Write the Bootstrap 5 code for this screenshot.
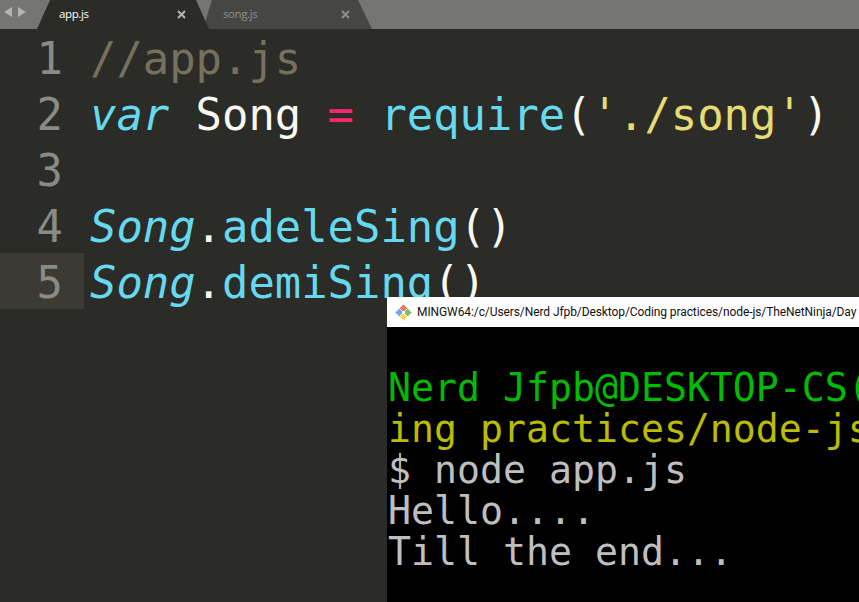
<!DOCTYPE html>
<html lang="en">
<head>
<meta charset="utf-8">
<title>app.js</title>
<link rel="stylesheet" href="https://cdn.jsdelivr.net/npm/bootstrap@5.3.0/dist/css/bootstrap.min.css">
<style>
html,body{width:859px;height:602px;overflow:hidden;background:#2b2c27;margin:0}
.stage{position:relative;width:859px;height:602px;overflow:hidden}
.tabbar{height:29px;background:#757672;position:relative}
.arrows{width:37px;padding-left:4px;gap:6px;height:29px;padding-bottom:5px}
.tabshape{position:absolute;top:0;height:29px;font:11.5px "Open Sans","Liberation Sans",sans-serif;letter-spacing:-.4px}
.tab-on{left:37px;width:172px;background:#2b2c27;color:#fff;clip-path:polygon(0 100%,13px 0,159px 0,172px 100%);z-index:2}
.tab-off{left:203px;width:169px;background:#464743;color:#8e8f8a;clip-path:polygon(0 100%,9px 0,155px 0,169px 100%);z-index:1}
.tabname{position:absolute;top:6px;line-height:16px}
.tab-on .tabname{left:22px}
.tab-off .tabname{left:20px}
.tabx{position:absolute;top:10px;width:9px;height:9px}
.tab-on .tabx{left:140px}
.tab-off .tabx{left:138px}
.codeline{height:56px;font:43.85px/59px "DejaVu Sans Mono",monospace;white-space:pre}
.gutter{width:84px;padding-right:21px;text-align:right;color:#8a8b86;flex:none;height:56px}
.codeline.current .gutter{background:#3b3b33}
.codetext{padding-left:6px;color:#f8f8f2}
.c-com{color:#75715e}.c-kw{color:#66d9ef;font-style:italic}.c-fn{color:#66d9ef}.c-op{color:#f92672}.c-str{color:#e6db74}
.term{position:absolute;left:387px;top:297px;width:472px;height:305px;background:#000;z-index:5}
.termhead{height:30px;background:#fff;padding-left:8px;gap:5px;font:12px/30px Roboto,"Liberation Sans",sans-serif;letter-spacing:-.09px;color:#111;white-space:nowrap}
.termbody{padding:0 0 0 1px;font:38.2px/41px "DejaVu Sans Mono",monospace;color:#bfbfbf}
.termrow{height:41px;white-space:pre}
.t-green{color:#00bb00}.t-yellow{color:#bbbb00}
</style>
</head>
<body>
<div class="stage">
  <div class="tabbar d-flex">
    <div class="arrows d-flex align-items-center">
      <svg width="8" height="10" viewBox="0 0 8 10"><path d="M8 0V10L0 5Z" fill="#b4b5b2"/></svg>
      <svg width="8" height="10" viewBox="0 0 8 10"><path d="M0 0V10L8 5Z" fill="#b4b5b2"/></svg>
    </div>
    <div class="tabshape tab-on"><span class="tabname">app.js</span>
      <svg class="tabx" viewBox="0 0 9 9"><path d="M1 1L8 8M8 1L1 8" stroke="#b5b5b2" stroke-width="2"/></svg></div>
    <div class="tabshape tab-off"><span class="tabname">song.js</span>
      <svg class="tabx" viewBox="0 0 9 9"><path d="M1 1L8 8M8 1L1 8" stroke="#8f908c" stroke-width="2"/></svg></div>
  </div>
  <div class="codeline d-flex"><div class="gutter">1</div><div class="codetext"><span class="c-com">//app.js</span></div></div>
  <div class="codeline d-flex"><div class="gutter">2</div><div class="codetext"><span class="c-kw">var</span> Song <span class="c-op">=</span> <span class="c-fn">require</span>(<span class="c-str">'./song'</span>)</div></div>
  <div class="codeline d-flex"><div class="gutter">3</div><div class="codetext"></div></div>
  <div class="codeline d-flex"><div class="gutter">4</div><div class="codetext"><span class="c-kw">Song</span>.<span class="c-fn">adeleSing</span>()</div></div>
  <div class="codeline current d-flex"><div class="gutter">5</div><div class="codetext"><span class="c-kw">Song</span>.<span class="c-fn">demiSing</span>()</div></div>
  <div class="term">
    <div class="termhead d-flex align-items-center">
      <svg width="17" height="17" viewBox="0 0 17 17" class="flex-shrink-0"><g stroke="#fff" stroke-width=".7"><path d="M8.500 0L12.750 4.250 8.500 8.500 4.250 4.250Z" fill="#e9776c"/><path d="M8.500 8.500L12.750 4.250 17 8.500 12.750 12.750Z" fill="#78c068"/><path d="M8.500 8.500L12.750 12.750 8.500 17 4.250 12.750Z" fill="#f3d858"/><path d="M8.500 8.500L4.250 12.750 0 8.500 4.250 4.250Z" fill="#6ea6e8"/></g><circle cx="8.500" cy="8.500" r="1.600" fill="#fff"/></svg>
      <span>MINGW64:/c/Users/Nerd Jfpb/Desktop/Coding practices/node-js/TheNetNinja/Day</span>
    </div>
    <div class="termbody">
      <div class="termrow"></div>
      <div class="termrow t-green">Nerd Jfpb@DESKTOP-CS(</div>
      <div class="termrow t-yellow">ing practices/node-js</div>
      <div class="termrow">$ node app.js</div>
      <div class="termrow">Hello....</div>
      <div class="termrow">Till the end...</div>
    </div>
  </div>
</div>
<script src="https://cdn.jsdelivr.net/npm/bootstrap@5.3.0/dist/js/bootstrap.bundle.min.js"></script>
</body>
</html>
